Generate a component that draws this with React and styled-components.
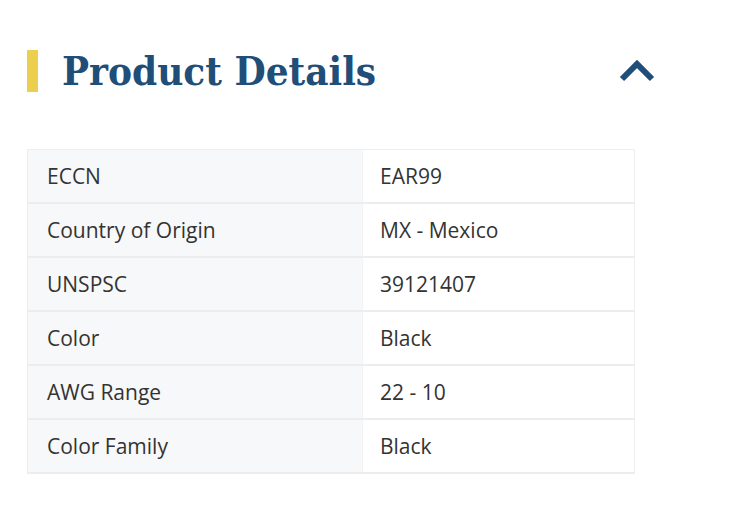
import React from "react";
import styled, { createGlobalStyle } from "styled-components";

const GlobalStyle = createGlobalStyle`
  html, body {
    margin: 0;
    padding: 0;
    background: #ffffff;
  }
  body {
    font-family: "Open Sans", "Liberation Sans", sans-serif;
  }
`;

const details = [
  { label: "ECCN", value: "EAR99" },
  { label: "Country of Origin", value: "MX - Mexico" },
  { label: "UNSPSC", value: "39121407" },
  { label: "Color", value: "Black" },
  { label: "AWG Range", value: "22 - 10" },
  { label: "Color Family", value: "Black" },
];

function App() {
  return (
    <>
      <GlobalStyle />
      <Section>
        <Header>
          <Title>Product Details</Title>
          <Toggle aria-label="Collapse">
            <svg width="36" height="22" viewBox="0 0 36 22">
              <path
                d="M3 19 L18 4 L33 19"
                fill="none"
                stroke="#1f4e79"
                strokeWidth="6"
                strokeLinejoin="miter"
              />
            </svg>
          </Toggle>
        </Header>
        <Table>
          <tbody>
            {details.map((row) => (
              <tr key={row.label}>
                <Label>{row.label}</Label>
                <Value>{row.value}</Value>
              </tr>
            ))}
          </tbody>
        </Table>
      </Section>
    </>
  );
}

export default App;

const Section = styled.section`
  width: 608px;
  padding: 50px 0 0 27px;
`;

const Header = styled.div`
  display: flex;
  align-items: center;
  justify-content: space-between;
  height: 42px;
`;

const Title = styled.h2`
  margin: 0;
  padding-left: 24px;
  border-left: 11px solid #eccf4f;
  font-family: "DejaVu Serif", "Liberation Serif", serif;
  font-stretch: condensed;
  font-weight: 700;
  font-size: 40px;
  line-height: 42px;
  color: #1f4e79;
`;

const Toggle = styled.button`
  display: flex;
  align-items: center;
  justify-content: center;
  margin-right: -20px;
  padding: 0;
  border: 0;
  background: none;
  cursor: pointer;
`;

const Table = styled.table`
  width: 608px;
  margin-top: 57px;
  border-collapse: collapse;
  border: 1px solid #eeeeee;
  font-size: 21px;
  color: #333333;
`;

const Label = styled.td`
  width: 296px;
  height: 52px;
  padding: 0 19px;
  background: #f7f8f9;
  border-bottom: 2px solid #ededed;
  border-right: 1px solid #f2f2f2;
`;

const Value = styled.td`
  height: 52px;
  padding: 0 17px;
  background: #ffffff;
  border-bottom: 2px solid #ededed;
`;
